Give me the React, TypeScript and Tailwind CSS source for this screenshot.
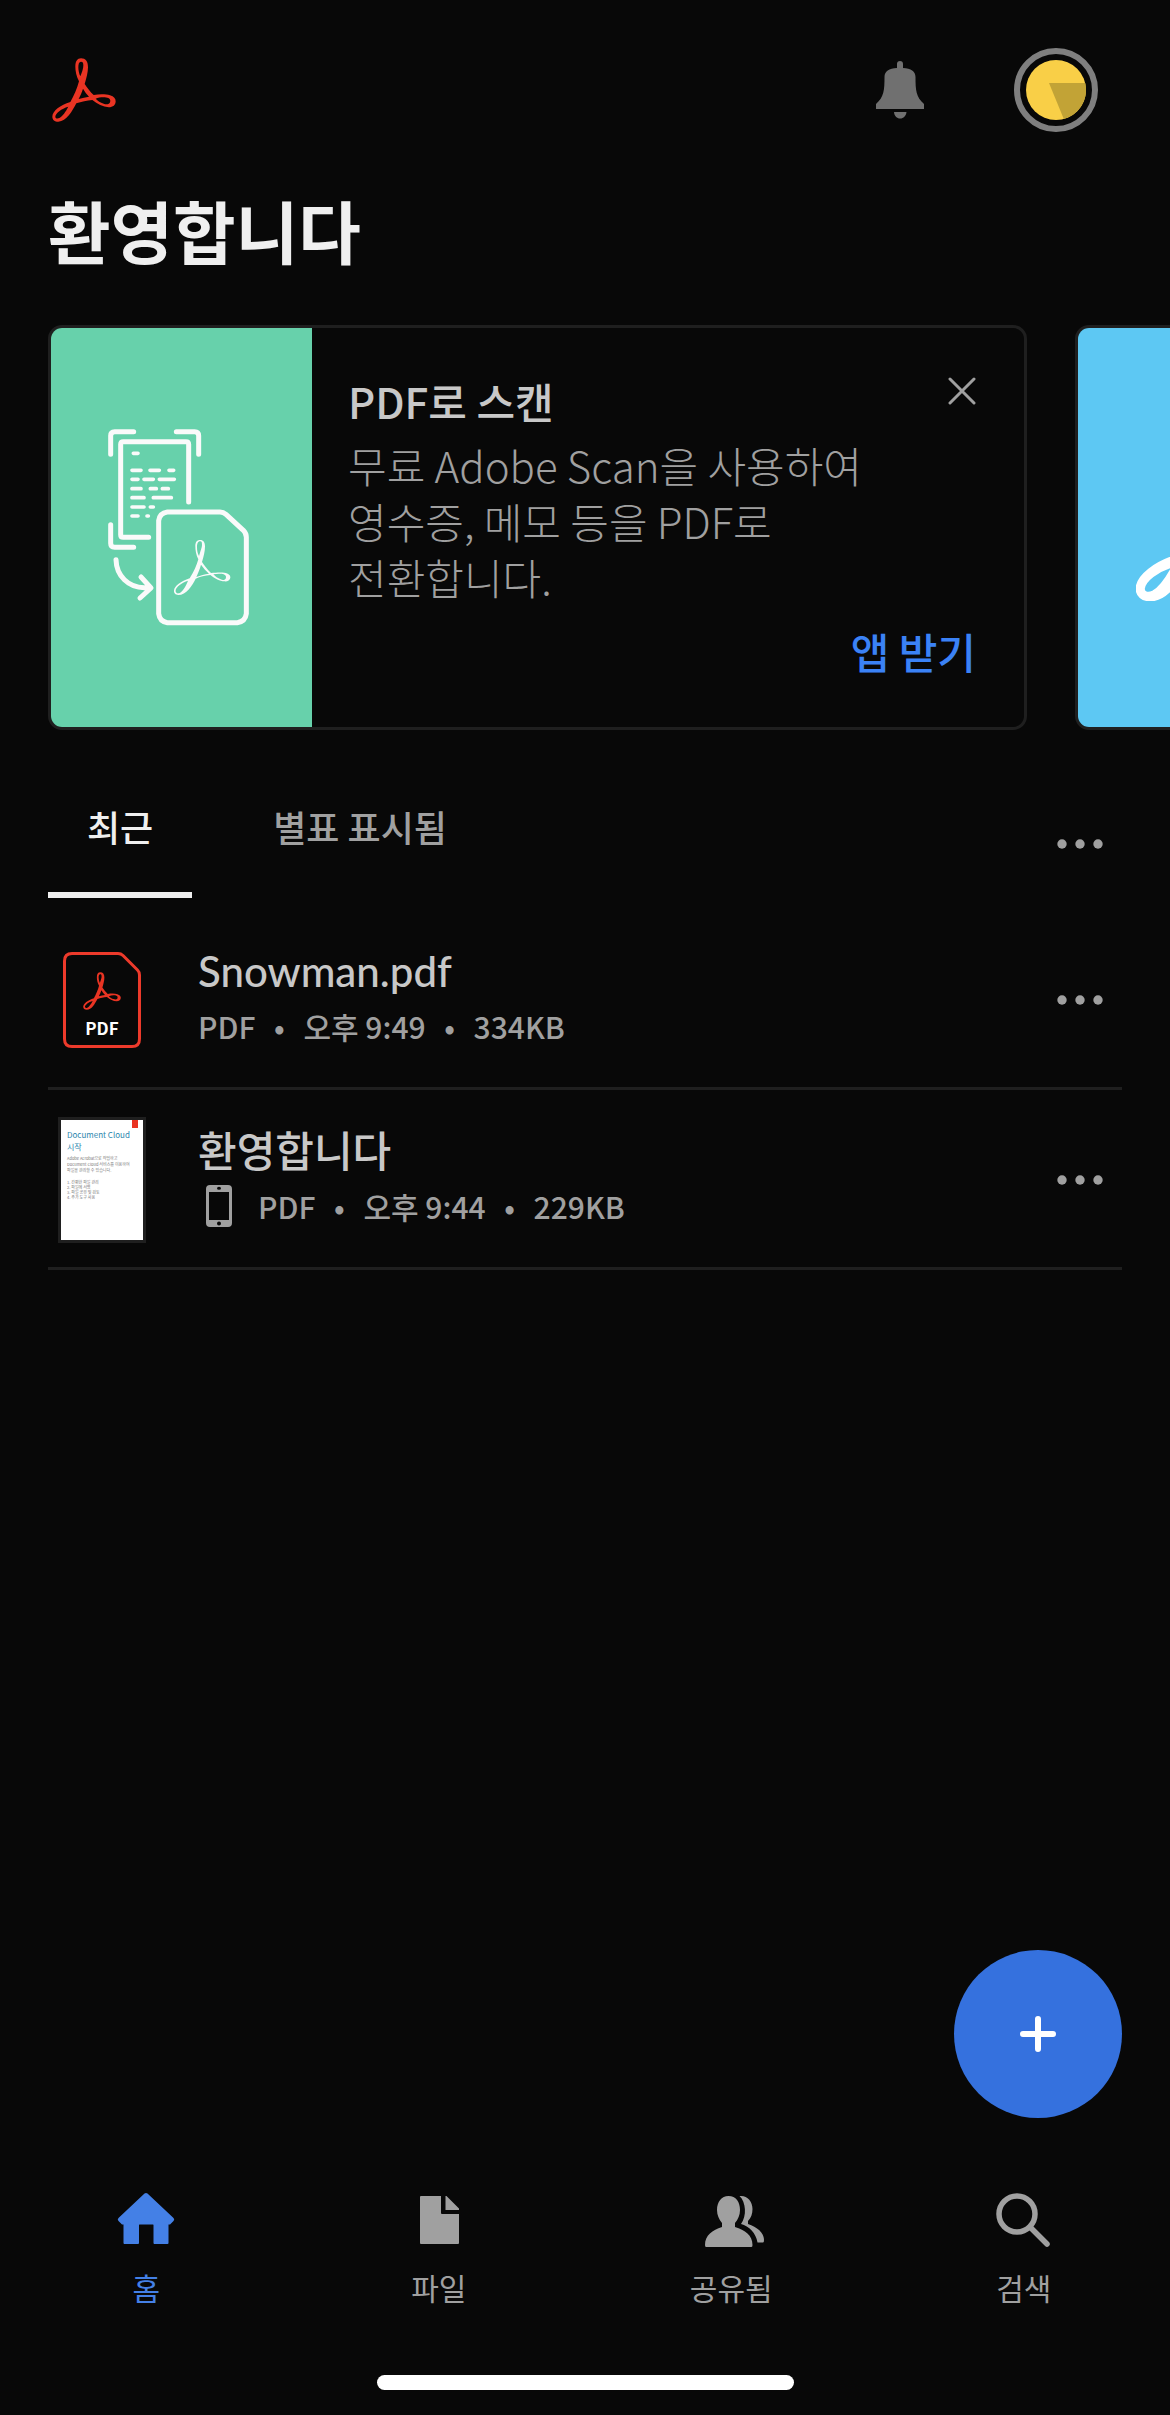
import { useState } from "react";

type IconProps = { className?: string };

function AcrobatMark({ className }: IconProps) {
  return (
    <svg className={className} viewBox="156 114 192 192" fill="currentColor" fillRule="evenodd" aria-hidden="true">
      <path d="M243 115C257 115 264 124 264 142C264 158 259 175 254 192C261 203 270 215 281 225C298 222 318 222 330 226C342 230 347 236 347 244C347 255 339 262 326 262C309 261 292 252 277 240C261 241 244 245 229 250C217 273 199 305 175 305C164 305 157 299 157 290C157 273 181 255 211 246C222 227 231 206 237 184C229 168 226 153 226 140C226 124 232 115 243 115ZM243 125C237 125 235 132 235 142C235 151 237 161 241 169C246 156 250 146 250 136C250 128 248 125 243 125ZM249 206C246 216 241 227 236 237C247 234 257 232 267 230C260 223 254 215 249 206ZM287 236C299 231 316 231 325 234C332 237 332 244 329 249C325 254 318 254 311 251C301 248 293 242 287 236ZM205 260C184 266 167 279 166 290C166 295 171 297 178 294C188 289 197 275 205 260Z" />
    </svg>
  );
}

function ScanArt({ className }: IconProps) {
  return (
    <svg className={className} viewBox="234 354 426 594" fill="none" stroke="currentColor" strokeWidth="15" strokeLinecap="round" strokeLinejoin="round" aria-hidden="true">
      <path d="M242 433V377Q242 365 254 365H311M439 365H494Q506 365 506 377V433M242 644V700Q242 712 254 712H311" />
      <path d="M476 576V403Q476 395 468 395H280Q272 395 272 403V674Q272 682 280 682H356" />
      <path strokeWidth="11" d="M310 430H324M306 481H333M360 481H388M417 481H431M306 508H324M342 508H370M388 508H433M306 536H333M361 536H379M397 536H415M306 563H342M370 563H424M306 591H342M361 591H370M306 618H324M351 618H355" />
      <path d="M258 749C259 797 295 834 345 833M333 801L363 834L330 864" />
      <path d="M412 606H570Q580 606 588 613L640 661Q649 670 649 682V911Q646 935 622 938H412Q389 935 386 911V632Q389 609 412 606Z" />
      <path
        stroke="none"
        fill="currentColor"
        fillRule="evenodd"
        d="M510 690C521 690 525 698 525 709C525 725 521 740 516 756C522 766 532 778 543 789C560 787 575 787 583 788C596 790 602 796 601 803C600 811 592 815 583 814C570 814 554 806 541 795C525 797 510 800 497 806C488 826 468 855 445 855C436 855 431 849 432 841C434 828 452 814 479 805C492 785 500 765 505 748C498 735 496 720 496 708C496 696 501 690 510 690ZM511 694C503 694 501 702 501 712C501 722 503 731 507 738C512 722 516 712 516 705C516 697 515 694 511 694ZM513 764C509 778 504 790 499 801C512 796 524 793 537 791C528 783 520 774 513 764ZM550 793C560 791 575 791 581 793C589 796 589 802 587 806C584 810 578 811 572 808C563 804 556 800 550 793ZM474 812C456 818 438 830 437 841C436 848 440 851 446 850C456 848 466 832 474 812Z"
      />
    </svg>
  );
}

function BellIcon({ className }: IconProps) {
  return (
    <svg className={className} viewBox="0 0 48 58" fill="currentColor" aria-hidden="true">
      <path d="M21 7V3a3 3 0 0 1 6 0v4c8 .5 12.500 3 12.500 9 0 13 .5 20 8.500 27v5H0v-5c8-7 8.500-14 8.500-27C8.500 10 13 7.500 21 7ZM18 51h12.500c-.5 4-3 6.500-6.300 6.500S18.300 55 18 51Z" />
    </svg>
  );
}

function MoreIcon() {
  return (
    <svg className="h-[10px] w-[46px]" viewBox="0 0 46 10" fill="currentColor" aria-hidden="true">
      <circle cx="5" cy="5" r="4.700" />
      <circle cx="23" cy="5" r="4.700" />
      <circle cx="41" cy="5" r="4.700" />
    </svg>
  );
}

function PhoneIcon({ className }: IconProps) {
  return (
    <svg className={className} viewBox="0 0 42 42" fill="currentColor" fillRule="evenodd" aria-hidden="true">
      <path d="M12 0h18q4 0 4 4v34q0 4-4 4H12q-4 0-4-4V4q0-4 4-4ZM11 7v28h20V7ZM21 1.800a2 1.500 0 0 0 0 3 2 1.500 0 0 0 0-3ZM21 36.500a2 2 0 0 0 0 4 2 2 0 0 0 0-4Z" />
    </svg>
  );
}

function PdfFileIcon() {
  return (
    <div className="relative flex h-24 w-[78px] flex-col items-center">
      <svg className="absolute inset-0 size-full text-[#ec3a2b]" viewBox="0 0 78 96" fill="none" stroke="currentColor" strokeWidth="3" aria-hidden="true">
        <path d="M9 1.500H55Q58 1.500 60 3.500L74.500 18Q76.500 20 76.500 23V87Q76.500 94.500 69 94.500H9Q1.500 94.500 1.500 87V9Q1.500 1.500 9 1.500Z" />
      </svg>
      <AcrobatMark className="mt-5 size-[38px] text-[#e93423]" />
      <span className="mt-2 text-[17px] leading-5 font-bold text-white">PDF</span>
    </div>
  );
}

function DocumentThumb() {
  return (
    <div className="h-[126px] w-[88px] overflow-hidden border-3 border-[#1f1f1f] bg-white pl-1.5 text-[#777]">
      <div className="flex h-2 justify-end pr-[5px]">
        <span className="w-1.5 bg-[#e93423]" />
      </div>
      <p className="mt-px text-[8px] leading-[12px] whitespace-nowrap text-[#2a86ad]">
        Document Cloud
        <br />
        시작
      </p>
      <p className="mt-0.5 text-[4px] leading-[6px] whitespace-nowrap">
        Adobe Acrobat으로 작업하고
        <br />
        Document Cloud 서비스를 이용하여
        <br />
        파일을 관리할 수 있습니다.
      </p>
      <ol className="mt-[7px] list-inside list-decimal text-[4px] leading-[5px]">
        <li>간편한 파일 관리</li>
        <li>파일에 서명</li>
        <li>파일 공유 및 검토</li>
        <li>추가 도구 사용</li>
      </ol>
    </div>
  );
}

function HomeIcon() {
  return (
    <svg className="size-[72px]" viewBox="0 0 72 72" fill="currentColor" aria-hidden="true">
      <path d="M34.500 9.500Q36 8.300 37.500 9.500L63.500 34Q65 35.500 63.500 37L60 40.500H58.500V59Q58.500 60 57.500 60H44.500Q43.500 60 43.500 59V41Q43.500 40.500 43 40.500H29.500Q29 40.500 29 41V59Q29 60 28 60H14.500Q13.500 60 13.500 59V40.500H12L8.500 37Q7 35.500 8.500 34Z" />
    </svg>
  );
}

function FileIcon() {
  return (
    <svg className="size-[72px]" viewBox="0 0 72 72" fill="currentColor" aria-hidden="true">
      <path d="M18 12H38V29Q38 30 39 30H56V59Q56 60 55 60H18Q17 60 17 59V13Q17 12 18 12ZM42.500 12H43.500L56 24.500V26H42.500Z" />
    </svg>
  );
}

function SharedIcon() {
  return (
    <svg className="size-[72px]" viewBox="0 0 72 72" fill="currentColor" aria-hidden="true">
      <path d="M33.500 12C41 12 45 18 45 26C45 31 43 35.500 40 39V43C50 46 57.500 51 57.500 61Q57.500 63 56.500 63H11Q10 63 10 61C10 51 17.500 46 27 43V39C24 35.500 22 31 22 26C22 18 26.500 12 33.500 12Z" />
      <path d="M44.500 12C52 11 57.500 17 57.500 25C57.500 30 56 34 53 37V40C62 43 69 48.500 69 56Q69 58.500 68 58.500H62.500C61 49 54 42 46 40C52 32 51 18 44.500 12Z" />
    </svg>
  );
}

function SearchIcon() {
  return (
    <svg className="size-[72px]" viewBox="0 0 72 72" fill="none" stroke="currentColor" aria-hidden="true">
      <circle cx="29" cy="30" r="18" strokeWidth="5.500" />
      <path d="M43 44L59 60" strokeWidth="5.500" strokeLinecap="round" />
    </svg>
  );
}

const files = [
  { name: "Snowman.pdf", time: "오후 9:49", size: "334KB", local: false, thumb: <PdfFileIcon /> },
  { name: "환영합니다", time: "오후 9:44", size: "229KB", local: true, thumb: <DocumentThumb /> },
];

const tabs = ["최근", "별표 표시됨"];

const navItems = [
  { label: "홈", icon: <HomeIcon /> },
  { label: "파일", icon: <FileIcon /> },
  { label: "공유됨", icon: <SharedIcon /> },
  { label: "검색", icon: <SearchIcon /> },
];

function Bullet() {
  return (
    <span className="w-12 text-center" aria-hidden="true">
      •
    </span>
  );
}

function Header() {
  return (
    <header className="flex h-[84px] items-center pr-6">
      <AcrobatMark className="ml-1 size-16 text-[#e93423]" />
      <button type="button" aria-label="알림" className="ml-auto text-[#707070]">
        <BellIcon className="h-[58px] w-12" />
      </button>
      <button type="button" aria-label="프로필" className="ml-[90px] rounded-full border-6 border-[#7f7f7f] p-1.5">
        <svg className="size-[60px]" viewBox="0 0 60 60" aria-hidden="true">
          <circle cx="30" cy="30" r="30" fill="#f9cf47" />
          <path d="M23 23H59.200A30 30 0 0 1 37.800 59Z" fill="#c2a336" />
        </svg>
      </button>
    </header>
  );
}

function ScanCard() {
  return (
    <article className="flex w-[calc(100%-143px)] shrink-0 overflow-hidden rounded-[14px] border-3 border-[#1f1f1f]">
      <div className="flex w-[261px] shrink-0 items-center justify-center bg-[#67d1ab] pr-1.5 pb-0.5 text-[#fafafa]">
        <ScanArt className="h-[198px] w-[142px]" />
      </div>
      <div className="flex flex-1 flex-col pt-[45px] pr-12 pb-12 pl-9 text-[42px] leading-[56px]">
        <div className="flex items-start justify-between">
          <h2 className="font-medium text-[#c8c8c8]">PDF로 스캔</h2>
          <button type="button" aria-label="닫기" className="flex h-9 items-center text-[#a0a0a0]">
            <svg className="size-7" viewBox="0 0 28 28" stroke="currentColor" strokeWidth="3" strokeLinecap="round" aria-hidden="true">
              <path d="M2 2L26 26M26 2L2 26" />
            </svg>
          </button>
        </div>
        <p className="mt-2 max-w-[560px] font-light break-keep text-[#a0a0a0]">
          무료 Adobe Scan을 사용하여 영수증, 메모 등을 PDF로 전환합니다.
        </p>
        <a href="#get-app" className="mt-[18px] self-end font-medium text-[#3b82f6]">
          앱 받기
        </a>
      </div>
    </article>
  );
}

export default function App() {
  const [activeTab, setActiveTab] = useState(tabs[0]);

  return (
    <div className="flex min-h-screen flex-col overflow-hidden bg-[#080808] font-['Noto_Sans_CJK_KR',sans-serif] text-[#a0a0a0]">
      <main className="relative flex-1 px-12 pt-12 pb-9">
        <Header />
        <h1 className="mt-12 text-[68px] leading-[100px] font-bold text-[#efefef]">환영합니다</h1>

        <section className="mt-[45px] -mr-12 flex gap-12 overflow-hidden">
          <ScanCard />
          <article className="flex w-[calc(100%-143px)] shrink-0 overflow-hidden rounded-[14px] border-3 border-[#1f1f1f]">
            <div className="flex w-[261px] items-center justify-center bg-[#5dc8f3] text-white">
              <AcrobatMark className="size-[146px] stroke-current stroke-3" />
            </div>
          </article>
        </section>

        <div className="mt-[60px] flex items-stretch gap-[42px]" role="tablist">
          {tabs.map((tab) => (
            <button
              key={tab}
              type="button"
              role="tab"
              aria-selected={tab === activeTab}
              onClick={() => setActiveTab(tab)}
              className={`border-b-6 px-[39px] pt-3 pb-[42px] text-[36px] leading-[48px] font-medium ${
                tab === activeTab ? "border-[#efefef] text-[#efefef]" : "border-transparent"
              }`}
            >
              {tab}
            </button>
          ))}
          <button type="button" aria-label="더 보기" className="ml-auto flex w-[84px] items-center justify-center">
            <MoreIcon />
          </button>
        </div>

        <ul className="mt-3">
          {files.map((file) => (
            <li key={file.name} className="flex h-[180px] items-center border-b-3 border-[#1f1f1f] pt-[3px]">
              <div className="flex w-[108px] justify-center">{file.thumb}</div>
              <div className="ml-[42px] flex flex-col pb-2.5">
                <h3 className="font-['Lato','Noto_Sans_CJK_KR',sans-serif] text-[42px] leading-[62px] font-medium text-[#c8c8c8]">
                  {file.name}
                </h3>
                <p className="flex items-center text-[30px] leading-[48px] font-medium">
                  {file.local ? <PhoneIcon className="mr-[18px] size-[42px]" /> : null}
                  <span>PDF</span>
                  <Bullet />
                  <span>{file.time}</span>
                  <Bullet />
                  <span>{file.size}</span>
                </p>
              </div>
              <button
                type="button"
                aria-label={`${file.name} 옵션`}
                className="ml-auto flex h-full w-[84px] items-center justify-center"
              >
                <MoreIcon />
              </button>
            </li>
          ))}
        </ul>

        <button
          type="button"
          aria-label="추가"
          className="absolute right-12 bottom-9 flex size-[168px] items-center justify-center rounded-full bg-[#3571de] text-white"
        >
          <svg className="size-9" viewBox="0 0 36 36" stroke="currentColor" strokeWidth="6" strokeLinecap="round" aria-hidden="true">
            <path d="M3 18H33M18 3V33" />
          </svg>
        </button>
      </main>

      <nav className="grid grid-cols-4 pt-[30px]">
        {navItems.map((item, i) => (
          <a
            key={item.label}
            href="#"
            aria-current={i === 0 ? "page" : undefined}
            className={`flex flex-col items-center gap-[9px] ${i === 0 ? "text-[#4480e6]" : ""}`}
          >
            {item.icon}
            <span className="text-[30px] leading-[44px]">{item.label}</span>
          </a>
        ))}
      </nav>
      <div className="mx-auto mt-[66px] mb-[25px] h-[15px] w-[417px] rounded-full bg-white" />
    </div>
  );
}
